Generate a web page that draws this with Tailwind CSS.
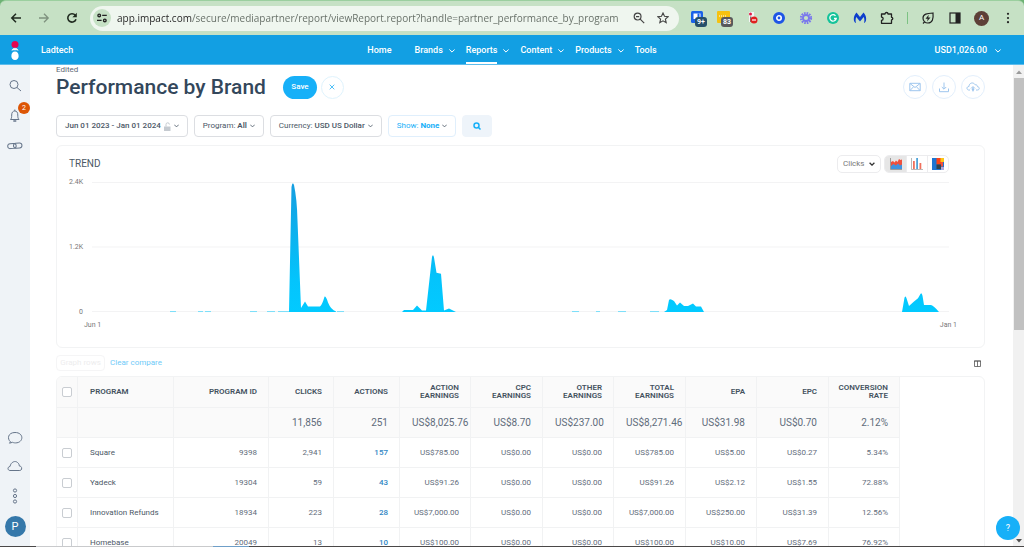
<!DOCTYPE html>
<html lang="en">
<head>
<meta charset="utf-8">
<meta name="viewport" content="width=device-width, initial-scale=1">
<title>Performance by Brand</title>
<script src="https://cdn.jsdelivr.net/npm/@tailwindcss/browser@4"></script>
</head>
<body class="h-screen overflow-hidden bg-white">
<svg class="hidden">
  <symbol id="chev" viewBox="0 0 6 4"><path d="M.6.7 3 3.1 5.4.7" fill="none" stroke="currentColor" stroke-linecap="round" stroke-linejoin="round"/></symbol>
</svg>
<div class="relative flex h-full flex-col font-['Roboto',sans-serif] text-[8px] text-[#4b5866]">

  <!-- Browser toolbar -->
  <header class="shrink-0 bg-[#6db274]">
    <div class="flex h-[35px] items-center rounded-t-md border-t border-[#9bcf9f] bg-[#c6e1c5] pr-2.5 pl-2.5 text-[#222]">
      <button aria-label="Back" class="mr-4 size-3"><svg viewBox="0 0 12 12" class="size-3"><path d="M11 6H2M6 1.8 1.8 6 6 10.2" fill="none" stroke="#1f2a1f" stroke-width="1.5"/></svg></button>
      <button aria-label="Forward" class="mr-4 size-3"><svg viewBox="0 0 12 12" class="size-3"><path d="M1 6h9M6 1.8 10.2 6 6 10.2" fill="none" stroke="#7f927f" stroke-width="1.3"/></svg></button>
      <button aria-label="Reload" class="mr-3 size-3"><svg viewBox="0 0 12 12" class="size-3"><path d="M10 7.2A4.2 4.2 0 1 1 9.3 3.3" fill="none" stroke="#1f2a1f" stroke-width="1.6"/><path d="M10.8.8v4.4H6.4z" fill="#1f2a1f"/></svg></button>
      <div class="flex h-[25px] min-w-0 flex-1 items-center rounded-full bg-[#eff6ef] pr-2.5 pl-[3px]">
        <button aria-label="Site information" class="grid size-[18px] shrink-0 place-items-center rounded-full bg-[#c6e1c5]"><svg viewBox="0 0 12 12" class="size-3"><g fill="none" stroke="#222" stroke-width="1.4"><circle cx="3.2" cy="3.4" r="1.3"/><path d="M6.2 3.4h4.6M1 8.4h4.6"/><circle cx="8.8" cy="8.4" r="1.3"/></g></svg></button>
        <input aria-label="Address" class="ml-1.5 min-w-0 flex-1 bg-[linear-gradient(90deg,#222_75px,#626b63_75px)] bg-clip-text font-['Open_Sans',sans-serif] text-[10px] leading-4 text-transparent outline-none" value="app.impact.com/secure/mediapartner/report/viewReport.report?handle=partner_performance_by_program">
        <button aria-label="Zoom" class="mr-3 size-3"><svg viewBox="0 0 12 12" class="size-3"><g fill="none" stroke="#444" stroke-width="1.2"><circle cx="4.6" cy="4.6" r="3.4"/><path d="m7.2 7.2 4 4M3 4.6h3.2"/></g></svg></button>
        <button aria-label="Bookmark" class="size-3"><svg viewBox="0 0 12 12" class="size-3"><path d="m6 1 1.5 3.3 3.6.4-2.7 2.4.8 3.6L6 8.8l-3.2 1.9.8-3.6L.9 4.7l3.6-.4z" fill="none" stroke="#444" stroke-width="1.1"/></svg></button>
      </div>
      <div class="ml-3 flex items-center gap-[11px]">
        <button aria-label="Extension, 9+" class="relative -mr-px size-4"><svg viewBox="0 0 16 16" class="size-4"><rect y="1" width="12" height="12" rx="1.5" fill="#1a62e8"/><path d="M2.5 3.5h7v5.5h-7z" fill="#fff"/><path d="M6.5 3.5h2v3.5h-2z" fill="#1a62e8"/></svg><span class="absolute top-[7px] left-1 rounded-[3px] bg-[#27506a] px-0.5 text-[7px] leading-[10px] font-bold text-white">9+</span></button>
        <button aria-label="Extension, 83" class="relative size-4"><svg viewBox="0 0 16 16" class="size-4"><rect y="1" width="13" height="12" rx="1" fill="#f6c210"/><path d="M2 6h7" stroke="#fff" stroke-dasharray="1 1"/></svg><span class="absolute top-[7px] left-1 rounded-[3px] bg-[#59595b] px-0.5 text-[7px] leading-[10px] font-bold text-white">83</span></button>
        <button aria-label="Blocker" class="size-4"><svg viewBox="0 0 16 16" class="size-4"><path d="M5 2h5v10H5z" fill="#f4f4f4"/><circle cx="6.5" cy="4" r="1.5" fill="#e11a48"/><path d="M6 6.5h1.5V12H6z" fill="#777"/><circle cx="10" cy="10" r="3.5" fill="#e02020"/><path d="M8 10h4" stroke="#fff" stroke-width="1.2"/></svg></button>
        <button aria-label="Target" class="size-4"><svg viewBox="0 0 16 16" class="size-4"><circle cx="8" cy="8" r="4.5" fill="#fff" stroke="#1e55e6" stroke-width="3"/><circle cx="8" cy="8" r="1.4" fill="#1e55e6"/></svg></button>
        <button aria-label="Burst" class="size-4"><svg viewBox="0 0 16 16" class="size-4"><circle cx="8" cy="8" r="3" fill="none" stroke="#7a78ec" stroke-width="1.8"/><circle cx="8" cy="8" r="4.6" fill="none" stroke="#7a78ec" stroke-width="3" stroke-dasharray="1.5 .908"/></svg></button>
        <button aria-label="Writing assistant" class="size-4"><svg viewBox="0 0 16 16" class="size-4"><circle cx="8" cy="8" r="6" fill="#15c39a"/><path d="M10.5 5.8A3.2 3.2 0 1 0 11.2 8.5H9" fill="none" stroke="#fff" stroke-width="1.3"/></svg></button>
        <button aria-label="Security" class="size-4"><svg viewBox="0 0 16 16" class="size-4"><path d="M4 13C1 12 1 6 4.5 2.5L8 7l3.5-4.5C15 6 15 12 12 13c.6-2 .6-4-.3-6L8 11.5 4.3 7c-.9 2-.9 4-.3 6z" fill="#0d3ecc"/></svg></button>
        <button aria-label="Extensions" class="size-4"><svg viewBox="0 0 16 16" class="size-4"><path d="M2.5 4H6a1.5 1.5 0 0 1 3 0h3.5v3.3a1.3 1.3 0 0 1 0 2.6V13.3h-10V10.3a1.6 1.6 0 0 0 0-3.2z" fill="none" stroke="#222" stroke-width="1.3" stroke-linejoin="round"/></svg></button>
        <span class="mx-px h-3 w-px bg-[#7cc283]"></span>
        <button aria-label="Energy saver" class="size-4"><svg viewBox="0 0 16 16" class="size-4"><path d="M13 3c.6 6-.6 10-5 10a4.8 4.8 0 0 1-5-5c0-4 4-4.600 10-5zM3 13.500l1.800-1.800" fill="none" stroke="#222" stroke-width="1.2"/><path d="M8.800 4.800 5.500 8.700h2.200L7 11.500l3.500-4H8.200z" fill="#222"/></svg></button>
        <button aria-label="Side panel" class="size-4"><svg viewBox="0 0 16 16" class="size-4"><rect x="3" y="3" width="10" height="10" fill="none" stroke="#222" stroke-width="1.2"/><path d="M8.500 3H13v10H8.500z" fill="#222"/></svg></button>
        <button aria-label="Profile" class="size-[15px] rounded-full bg-[#5d4037] text-[8px] leading-none text-white">A</button>
        <button aria-label="Menu" class="ml-0.5 size-3"><svg viewBox="0 0 12 12" class="size-3"><g fill="#222"><circle cx="6" cy="1.8" r="1.1"/><circle cx="6" cy="6" r="1.1"/><circle cx="6" cy="10.2" r="1.1"/></g></svg></button>
      </div>
    </div>
  </header>

  <!-- Application bar -->
  <nav class="grid h-[30px] shrink-0 grid-cols-[1fr_auto_1fr] items-center border-b border-[#5cbcec] bg-[#129fe3] pt-0.5 text-[9px] font-medium text-white">
    <div class="flex items-center gap-[22px] pl-[11px]">
      <svg viewBox="0 0 8 20" class="h-5 w-2"><circle cx="4" cy="3.5" r="3.5" fill="#e6054f"/><path d="M.8 9.300a3.500 3.500 0 0 1 6.400 0A5 5 0 0 0 4 8.900a5 5 0 0 0-3.200.4z" fill="#fff" stroke="#fff" stroke-width=".6"/><path d="M4 10.600c2.400 0 3.600 1.800 3.600 4.200A3.600 3.600 0 0 1 4 18.900 3.600 3.600 0 0 1 .4 14.800c0-2.400 1.200-4.200 3.600-4.200z" fill="#fff"/></svg>
      <span>Ladtech</span>
    </div>
    <div class="flex h-full items-stretch gap-[11px] [&_a]:flex [&_a]:items-center [&_svg]:h-1 [&_svg]:w-1.5">
      <a href="#" class="mr-3">Home</a>
      <div class="flex items-center gap-1.5"><a href="#">Brands</a><svg><use href="#chev"/></svg></div>
      <div class="flex items-center gap-1.5"><a href="#" aria-current="page" class="h-full border-y-2 border-t-transparent border-b-white">Reports</a><svg><use href="#chev"/></svg></div>
      <div class="flex items-center gap-1.5"><a href="#">Content</a><svg><use href="#chev"/></svg></div>
      <div class="flex items-center gap-1.5"><a href="#">Products</a><svg><use href="#chev"/></svg></div>
      <a href="#">Tools</a>
    </div>
    <button class="flex items-center gap-2 justify-self-end pr-[23px]">USD1,026.00<svg class="h-1 w-1.5"><use href="#chev"/></svg></button>
  </nav>

  <div class="flex min-h-0 flex-1">
    <!-- Side rail -->
    <aside class="flex w-[30px] shrink-0 flex-col items-center justify-between bg-[#eff3f7] pt-[13px] pb-2.5 text-[#66758a]">
      <div class="flex flex-col items-center gap-3.5">
        <button aria-label="Search" class="h-4"><svg viewBox="0 0 16 16" class="size-4"><g fill="none" stroke="currentColor"><circle cx="7" cy="6.5" r="4"/><path d="m10 9.500 4 3.500"/></g></svg></button>
        <button aria-label="Notifications" class="relative h-4"><svg viewBox="0 0 16 16" class="size-4"><path d="M3.500 11.500h8.500c-1-1-1.200-2-1.200-4.500s-1-4-3-4-3.100 1.500-3.100 4-.2 3.500-1.200 4.500zM7.800 1.500v1.500" fill="none" stroke="currentColor"/><path d="M6.300 13h3" stroke="currentColor" stroke-width="1.5"/></svg><span class="absolute -top-1.5 left-[11px] size-3 rounded-full bg-[#dc5505] text-[7px] leading-3 text-white">2</span></button>
        <button aria-label="Links" class="h-4"><svg viewBox="0 0 16 16" class="size-4"><g fill="none" stroke="currentColor"><rect x=".7" y="5.500" width="8.500" height="5" rx="2.500" transform="rotate(-4 5 8)"/><rect x="6.500" y="5" width="8.500" height="5" rx="2.500" transform="rotate(-4 11 8)"/></g></svg></button>
      </div>
      <div class="flex flex-col items-center">
        <button aria-label="Chat" class="mb-3 h-4"><svg viewBox="0 0 16 16" class="size-4"><path d="M3.500 11.800C0 9 .8 2.500 8 2.500c9.300 0 8.800 10.400.5 10.400-1.500 0-2.500-.4-3-.6L2.500 13.200z" fill="none" stroke="currentColor" stroke-linejoin="round"/></svg></button>
        <button aria-label="Cloud" class="mb-3.5 h-4"><svg viewBox="0 0 16 16" class="size-4"><path d="M3 12.500C.5 12.500.2 8.800 3 8.500 4 3.500 8.500 2.500 10.500 4.500c1.500 1 1.800 2.500 1.800 3.500 3.200 0 3 4.500.5 4.500z" fill="none" stroke="currentColor"/></svg></button>
        <button aria-label="More" class="mb-3 h-4"><svg viewBox="0 0 16 16" class="size-4"><g fill="none" stroke="currentColor"><circle cx="8" cy="2.500" r="1.600"/><circle cx="8" cy="8" r="1.600"/><circle cx="8" cy="13.500" r="1.600"/></g></svg></button>
        <button aria-label="Account" class="size-[21px] rounded-full bg-[#3578aa] text-[11px] leading-none text-white">P</button>
      </div>
    </aside>

    <main class="min-w-0 flex-1 overflow-hidden pr-7 pl-[26px]">
      <p class="h-2.5 leading-[10px] text-[#5d6875]">Edited</p>
      <div class="flex h-6 items-center">
        <h1 class="text-[21px] leading-6 font-medium text-[#33475b]">Performance by Brand</h1>
        <button class="ml-[17px] h-[23px] w-[34px] rounded-full bg-[#17b0f8] font-medium text-white">Save</button>
        <button aria-label="Discard changes" class="ml-1 grid size-[23px] place-items-center rounded-full border border-[#dff3fd] text-[#3eb9f5]"><svg viewBox="0 0 6 6" class="size-1.5"><path d="m.7.7 4.600 4.600M5.300.7.7 5.300" stroke="currentColor" stroke-width=".9"/></svg></button>
        <div class="ml-auto flex gap-[5px] text-[#9ec6ee] [&>button]:grid [&>button]:size-6 [&>button]:place-items-center [&>button]:rounded-full [&>button]:border [&>button]:border-[#e3effc]">
          <button aria-label="Email"><svg viewBox="0 0 12 12" class="size-3"><g fill="none" stroke="currentColor"><path d="M.8 2.300h10.400v7.400H.8z"/><path d="m1 2.500 5 4 5-4M1 9.500l3.500-3.700M11 9.500 7.500 5.800"/></g></svg></button>
          <button aria-label="Download"><svg viewBox="0 0 12 12" class="size-3"><path d="M1.500 7.500v3.200h9V7.500M6 1.500V8M3.800 6 6 8.200 8.200 6" fill="none" stroke="currentColor"/></svg></button>
          <button aria-label="Schedule"><svg viewBox="0 0 14 12" class="h-3 w-3.5"><g fill="none" stroke="currentColor"><path d="M4 9H2.500C.3 8.500.5 5.500 3 5.500 3 2 7 .5 9.300 3.800 11 3.500 11.500 5 11.500 5.700 14 6 13.700 9 11.500 9H10"/><path d="M7 10.500V6M5 7.500l2-2 2 2"/></g><circle cx="7" cy="8.500" r="1.200" fill="currentColor"/></svg></button>
        </div>
      </div>

      <!-- Filters -->
      <div class="mt-4 flex gap-1.5 [&_svg]:shrink-0 [&>button]:flex [&>button]:h-[22px] [&>button]:items-center [&>button]:justify-center [&>button]:rounded [&>button]:border [&>button]:border-[#dcdee2] [&>button]:px-2 [&>button]:whitespace-pre">
        <button class="font-medium">Jun 01 2023 - Jan 01 2024<svg viewBox="0 0 8 9" class="ml-0.5 h-[9px] w-2"><path d="M1 4.500h6.500V9H1z" fill="#c5cad0"/><path d="M3 4.500v-2a1.700 1.700 0 0 1 3.400 0" fill="none" stroke="#c5cad0"/></svg><svg class="ml-[3px] h-1 w-[5px]"><use href="#chev"/></svg></button>
        <button>Program: <b class="font-semibold">All</b><svg class="ml-[3px] h-1 w-[5px]"><use href="#chev"/></svg></button>
        <button>Currency: <b class="font-medium">USD US Dollar</b><svg class="ml-[3px] h-1 w-[5px]"><use href="#chev"/></svg></button>
        <button class="!border-[#e0effc] text-[#17b0f8]">Show: <b class="font-bold">None</b><svg class="ml-[3px] h-1 w-[5px] text-[#4b5866]"><use href="#chev"/></svg></button>
        <button aria-label="Run search" class="w-[30px] !border-[#eef4fa] bg-[#eef4fa]"><svg viewBox="0 0 8 8" class="size-2"><g fill="none" stroke="#17b0f8" stroke-width="1.500"><circle cx="3.500" cy="3.500" r="2.500"/><path d="m5.300 5.300 2.200 2.200"/></g></svg></button>
      </div>

      <!-- Trend chart -->
      <section class="mt-2 h-[203px] rounded-md border border-[#f2f3f4] pr-[35px] pl-3">
        <div class="flex h-[33px] items-center gap-[3px] pt-0.5">
          <h2 class="mr-auto text-[10px] text-[#4b5866]">TREND</h2>
          <div class="relative">
            <select aria-label="Metric" class="h-[18px] w-[44px] appearance-none rounded-[5px] border border-[#ececee] pl-[5px] text-[8px] text-[#777]"><option>Clicks</option></select>
            <svg viewBox="0 0 6 4" class="pointer-events-none absolute top-[7px] right-1.5 h-1 w-1.5"><path d="M.6.7 3 3.100 5.400.7" fill="none" stroke="#333" stroke-width="1.300"/></svg>
          </div>
          <div class="flex h-[18px] overflow-hidden rounded-[5px] border border-[#ececee] [&>button]:grid [&>button]:w-[21px] [&>button]:place-items-center">
            <button aria-label="Area chart" class="bg-[#e6e6e6]"><svg viewBox="0 0 12 12" class="size-3"><path d="M1 11V4l2-1 1.500 1.500L6 2.500 7.500 4 9 1l1.500 1L12 1.500V11z" fill="#f0503c"/><path d="M1 11V8L3.500 6 6 7.500l2-2L10 7.500l2-1V11z" fill="#3f93e0"/><path d="M.5 0v11.500H12" fill="none" stroke="#888" stroke-width=".8"/></svg></button>
            <button aria-label="Bar chart" class="border-l border-[#ececee]"><svg viewBox="0 0 12 12" class="size-3"><path d="M2 3h1.800v8H2zM8.500 5h1.800v6H8.500z" fill="#f0705c"/><path d="M5.200 0H7v11H5.200z" fill="#4fa3d8"/><path d="M.5 0v11.500H12" fill="none" stroke="#999" stroke-width=".7"/></svg></button>
            <button aria-label="Tree map" class="border-l border-[#ececee]"><svg viewBox="0 0 12 12" class="size-3"><path d="M0 0h12v12H0z" fill="#1e74d2"/><path d="M4.500 0H9v6.500H4.500z" fill="#fb4318"/><path d="M8.500 0H12v4H8.500z" fill="#fcc618"/><path d="M4.500 6.500H9V11H4.500z" fill="#34434c"/><path d="M9 4h2v4.500H9z" fill="#f0503c"/><path d="M9 9h3v3H9z" fill="#a9a6dd"/></svg></button>
          </div>
        </div>
        <div class="flex gap-[9px] text-[7px] leading-[9px] text-[#777]">
          <div class="-my-px flex w-3.5 flex-col justify-between text-right whitespace-nowrap"><span>2.4K</span><span>1.2K</span><span>0</span></div>
          <svg viewBox="0 0 857 138" preserveAspectRatio="none" class="h-[137px] min-w-0 flex-1">
            <defs><linearGradient id="area" x1="0" y1="5" x2="0" y2="134" gradientUnits="userSpaceOnUse"><stop offset="0" stop-color="#159ee0"/><stop offset=".75" stop-color="#04c4fc"/><stop offset="1" stop-color="#02caff"/></linearGradient></defs>
            <path d="M0 3.500h857M0 68.500h857M0 133.500h857" stroke="#f3f3f4"/>
            <g fill="url(#area)">
              <path d="M197 134 199.500 8Q200.500 2 202 6 205 20 205.500 42L209 130 213 123.500 216 128.500H228Q230 127 232.500 118.500 234 118 236 124.500 239 132 244 133.500V134z"/>
              <path d="M310 134 312 132H321L325 127.500 330 132.500H334L340 78.500Q341 75 342 79L344.500 94.500 349 95.500 352 132.500 357 130.500 364 134z"/>
              <path d="M572 134 575 132 577 122Q578 120 582 123L585 127.500 588 124.500 592 128H596L601 125.500 604 128.500H609L612 134z"/>
              <path d="M810 134 812.500 119.500Q813.500 117 814.500 120L817 128 822 123.500 826 120 828 116.500Q829.500 113 830.500 117.500L832 127H839Q842 128 847 134z"/>
            </g>
            <path d="M78 133.500h6M106 133.500h5M113 133.500h6M158 133.500h7M175 133.500h8M186 133.500h11M245 133.500h7M480 133.500h7M504 133.500h4M526 133.500h8M558 133.500h9" stroke="#02caff" stroke-opacity=".5"/>
          </svg>
        </div>
        <div class="mt-1 -mr-2 ml-[15px] flex justify-between text-[7px] leading-[10px] text-[#777]"><span>Jun 1</span><span>Jan 1</span></div>
      </section>

      <div class="mt-[7px] mb-[5px] flex h-4 items-center">
        <button disabled class="h-4 w-[49px] rounded border border-[#f5f5f6] text-[#ededee]">Graph rows</button>
        <a href="#" class="ml-[5px] text-[#6fcaf8]">Clear compare</a>
        <button aria-label="Columns" class="mr-1 ml-auto"><svg viewBox="0 0 7 7" class="size-[7px]"><path d="M.5 1h6v5.500h-6zM3.500 1v5.500M0 1h7" fill="none" stroke="#555" stroke-width=".8"/></svg></button>
      </div>

      <!-- Report table -->
      <div class="overflow-hidden rounded-t-md border border-[#f2f3f4]">
        <table class="w-[843px] table-fixed border-separate border-spacing-0 text-right text-[8px] whitespace-nowrap text-[#5f6c7b] [&_input]:block [&_input]:size-2.5 [&_input]:appearance-none [&_input]:rounded-xs [&_input]:border [&_input]:border-[#c9cdd2] [&_input]:bg-white [&_td]:h-[30px] [&_td]:border-r [&_td]:border-b [&_td]:border-[#f1f2f3] [&_td]:py-0 [&_td]:pr-[11px] [&_td]:pl-3 [&_td:first-child]:px-[5px] [&_td:nth-child(2)]:text-left [&_td:nth-child(2)]:text-[#4b5866] [&_th]:h-[31px] [&_th]:border-r [&_th]:border-b [&_th]:border-[#f1f2f3] [&_th]:py-0 [&_th]:pr-[11px] [&_th]:pl-2 [&_th]:leading-2 [&_th]:font-semibold [&_th:first-child]:px-[5px] [&_th:nth-child(2)]:pl-3 [&_th:nth-child(2)]:text-left">
          <colgroup><col class="w-[21px]"><col class="w-[96px]"><col class="w-[95px]"><col class="w-[65px]"><col class="w-[66px]"><col class="w-[71px]"><col class="w-[72px]"><col class="w-[71px]"><col class="w-[72px]"><col class="w-[71px]"><col class="w-[72px]"><col class="w-[71px]"></colgroup>
          <thead class="bg-[#fafafa] text-[#44525f]">
            <tr><th><input type="checkbox" aria-label="Select all"></th><th>PROGRAM</th><th>PROGRAM ID</th><th>CLICKS</th><th>ACTIONS</th><th>ACTION<br>EARNINGS</th><th>CPC<br>EARNINGS</th><th>OTHER<br>EARNINGS</th><th>TOTAL<br>EARNINGS</th><th>EPA</th><th>EPC</th><th>CONVERSION<br>RATE</th></tr>
          </thead>
          <tbody class="[&_a]:font-medium [&_a]:text-[#2f86c4]">
            <tr class="bg-[#fafafa] text-[10px]"><td></td><td></td><td></td><td>11,856</td><td>251</td><td>US$8,025.76</td><td>US$8.70</td><td>US$237.00</td><td>US$8,271.46</td><td>US$31.98</td><td>US$0.70</td><td>2.12%</td></tr>
            <tr><td><input type="checkbox" aria-label="Select Square"></td><td>Square</td><td>9398</td><td>2,941</td><td><a href="#">157</a></td><td>US$785.00</td><td>US$0.00</td><td>US$0.00</td><td>US$785.00</td><td>US$5.00</td><td>US$0.27</td><td>5.34%</td></tr>
            <tr><td><input type="checkbox" aria-label="Select Yadeck"></td><td>Yadeck</td><td>19304</td><td>59</td><td><a href="#">43</a></td><td>US$91.26</td><td>US$0.00</td><td>US$0.00</td><td>US$91.26</td><td>US$2.12</td><td>US$1.55</td><td>72.88%</td></tr>
            <tr><td><input type="checkbox" aria-label="Select Innovation Refunds"></td><td>Innovation Refunds</td><td>18934</td><td>223</td><td><a href="#">28</a></td><td>US$7,000.00</td><td>US$0.00</td><td>US$0.00</td><td>US$7,000.00</td><td>US$250.00</td><td>US$31.39</td><td>12.56%</td></tr>
            <tr><td><input type="checkbox" aria-label="Select Homebase"></td><td>Homebase</td><td>20049</td><td>13</td><td><a href="#">10</a></td><td>US$100.00</td><td>US$0.00</td><td>US$0.00</td><td>US$100.00</td><td>US$10.00</td><td>US$7.69</td><td>76.92%</td></tr>
          </tbody>
        </table>
      </div>
    </main>

    <!-- Scroll bar -->
    <div class="flex w-[11px] shrink-0 flex-col items-center bg-[#f1f1f1] pt-[5px] pb-1">
      <svg viewBox="0 0 6 4" class="h-1 w-1.5"><path d="M0 4h6L3 .5z" fill="#9a9a9a"/></svg>
      <span class="mt-1 h-[252px] w-2.5 bg-[#c1c1c1]"></span>
      <svg viewBox="0 0 6 4" class="mt-auto h-1 w-1.5"><path d="M0 0h6L3 3.500z" fill="#505050"/></svg>
    </div>
  </div>

  <button aria-label="Help" class="absolute right-1 bottom-[7px] size-6 rounded-full bg-[#17b0f8] text-[9px] leading-none text-white">?</button>
  <div class="absolute inset-x-0 bottom-0 flex h-px bg-[#4a4848]"><span class="ml-9 w-[177px] bg-[#c9cacc]"></span><span class="w-9 bg-[#6f9fc8]"></span></div>
</div>
</body>
</html>
